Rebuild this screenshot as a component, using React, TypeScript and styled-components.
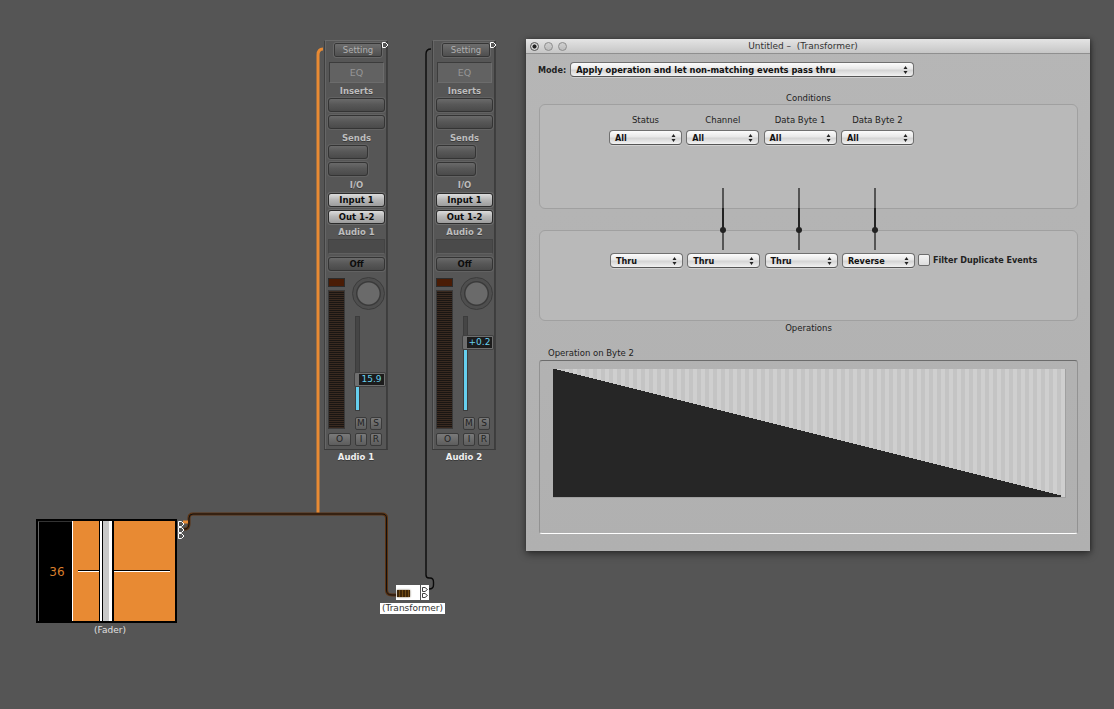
import React from "react";
import styled, { createGlobalStyle } from "styled-components";

const Global = createGlobalStyle`
  html, body { margin: 0; padding: 0; background: #555555; }
  #root { width: 1114px; height: 709px; overflow: hidden; }
  * { box-sizing: border-box; }
`;

const FONT = `"DejaVu Sans", "Liberation Sans", sans-serif`;

const Canvas = styled.div`
  position: relative;
  width: 1114px;
  height: 709px;
  background: #555555;
  font-family: ${FONT};
  overflow: hidden;
`;

const WireLayer = styled.svg`
  position: absolute;
  left: 0;
  top: 0;
`;

/* ---------- channel strip ---------- */
const StripNode = styled.div<{ $x: number }>`
  position: absolute;
  left: ${(p) => p.$x}px;
  top: 40px;
  width: 64px;
`;

const StripBody = styled.div`
  height: 410px;
  border: 1px solid #3f3f3f;
  border-bottom-color: #3a3a3a;
  border-top-color: #6a6a6a;
  background: #565656;
  box-shadow: inset 1px 0 0 #666, inset -1px 0 0 #3d3d3d;
  padding: 2px 2px 0 3px;
  display: flex;
  flex-direction: column;
  align-items: stretch;
`;

const StripLabel = styled.div<{ $h: number; $color?: string; $pt?: number }>`
  height: ${(p) => p.$h}px;
  padding-top: ${(p) => p.$pt ?? 0}px;
  line-height: ${(p) => p.$h - (p.$pt ?? 0)}px;
  font-size: 8.5px;
  font-weight: 700;
  text-align: center;
  color: ${(p) => p.$color ?? "#bdbdbd"};
  text-shadow: 0 1px 0 #3a3a3a;
`;

const SettingBtn = styled.div`
  align-self: center;
  width: 48px;
  height: 14px;
  line-height: 13px;
  margin-left: 3px;
  font-size: 8.5px;
  text-align: center;
  color: #b0b0b0;
  border: 1px solid #363636;
  outline: 1px solid #676767;
  border-radius: 2px;
  background: linear-gradient(#6d6d6d, #4f4f4f);
`;

const EqBox = styled.div`
  width: 55px;
  height: 21px;
  margin: 5px 0 0 1px;
  line-height: 19px;
  font-size: 9.5px;
  text-align: center;
  color: #969696;
  border: 1px solid #3c3c3c;
  border-right-color: #6c6c6c;
  border-bottom-color: #6c6c6c;
  background: #626262;
`;

const Slot = styled.div<{ $w?: number; $mt?: number; $light?: boolean }>`
  width: ${(p) => p.$w ?? 57}px;
  height: 14px;
  margin-top: ${(p) => p.$mt ?? 0}px;
  line-height: 12px;
  font-size: 8.5px;
  font-weight: 700;
  text-align: center;
  color: #0c0c0c;
  border: 1px solid ${(p) => (p.$light ? "#2b2b2b" : "#343434")};
  border-radius: 3px;
  box-shadow: 0 0 0 1px ${(p) => (p.$light ? "#6b6b6b" : "#626262")};
  background: ${(p) =>
    p.$light
      ? "linear-gradient(#dcdcdc, #b8b8b8 45%, #9d9d9d)"
      : "linear-gradient(#6a6a6a, #585858 45%, #4a4a4a)"};
`;

const Display = styled.div`
  width: 57px;
  height: 15px;
  background: #4a4a4a;
  border: 1px solid #434343;
  border-bottom-color: #606060;
`;

const LowerSection = styled.div`
  margin-top: 7px;
  display: grid;
  grid-template-columns: 17px 10px 12px 3px 12px;
  grid-template-rows: 12px 139px;
  position: relative;
`;

const MeterCap = styled.div`
  grid-column: 1;
  grid-row: 1;
  height: 9px;
  background: #4a1c05;
  border: 1px solid #2c2c2c;
`;

const Meter = styled.div`
  grid-column: 1;
  grid-row: 2;
  background: repeating-linear-gradient(#3a2a20 0 1px, #1a1613 1px 2px);
  border: 1px solid #3a3a3a;
`;

const Knob = styled.div`
  position: absolute;
  left: 24px;
  top: -1px;
  width: 33px;
  height: 33px;
  border-radius: 50%;
  border: 1px solid #3b3b3b;
  background: radial-gradient(circle, #6a6a6a 0 10.5px, #3a3a3a 11.5px 12px, #4e4e4e 13px);
`;

const FaderTrack = styled.div`
  position: absolute;
  left: 27px;
  top: 38px;
  width: 5px;
  height: 95px;
  background: #454545;
  border: 1px solid #3c3c3c;
`;

const FaderFill = styled.div`
  position: absolute;
  left: 0;
  right: 0;
  bottom: 0;
  background: #66cfee;
`;

const FaderHandle = styled.div<{ $top: number }>`
  position: absolute;
  left: 27px;
  top: ${(p) => p.$top}px;
  width: 30px;
  height: 13px;
  display: flex;
  padding: 1px 1px 1px 0;
  border-radius: 1px;
  background: #6f6f6f;
  box-shadow: 0 0 0 1px #404040;
`;

const FaderValue = styled.div`
  margin-left: 4px;
  flex: 1;
  background: #1c1c1c;
  color: #66cfee;
  font-size: 9px;
  line-height: 11px;
  text-align: center;
`;

const SmallBtn = styled.div<{ $x: number; $y: number; $w?: number }>`
  position: absolute;
  left: ${(p) => p.$x}px;
  top: ${(p) => p.$y}px;
  width: ${(p) => p.$w ?? 12}px;
  height: 13px;
  line-height: 11px;
  font-size: 9px;
  text-align: center;
  color: #222;
  background: linear-gradient(#7a7a7a, #5d5d5d);
  border: 1px solid #3a3a3a;
  border-radius: 2px;
`;

const Flag = styled.svg<{ $x: number; $y: number }>`
  position: absolute;
  left: ${(p) => p.$x}px;
  top: ${(p) => p.$y}px;
`;

const FlagIcon = ({ x, y }: { x: number; y: number }) => (
  <Flag $x={x} $y={y} width="7" height="6" viewBox="0 0 7 6">
    <path d="M0.5 0.5H3.5L6 3L3.5 5.5H0.5Z" fill="#555" stroke="#fff" strokeWidth="1" />
  </Flag>
);

const DarkFlagIcon = ({ x, y }: { x: number; y: number }) => (
  <Flag $x={x} $y={y} width="6" height="5" viewBox="0 0 6 5">
    <path d="M0.5 0.5H3L5.5 2.5L3 4.5H0.5Z" fill="#fff" stroke="#444" strokeWidth="1" />
  </Flag>
);

const Strip = ({ x, name, value, handleTop, fill }: { x: number; name: string; value: string; handleTop: number; fill: number }) => (
  <StripNode $x={x}>
    <StripBody>
      <SettingBtn>Setting</SettingBtn>
      <EqBox>EQ</EqBox>
      <StripLabel $h={15} $pt={2}>Inserts</StripLabel>
      <Slot />
      <Slot $mt={3} />
      <StripLabel $h={16} $pt={2}>Sends</StripLabel>
      <Slot $w={40} />
      <Slot $w={40} $mt={3} />
      <StripLabel $h={17} $pt={1}>I/O</StripLabel>
      <Slot $light>Input 1</Slot>
      <Slot $light $mt={3}>Out 1-2</Slot>
      <StripLabel $h={15} $pt={2}>{name}</StripLabel>
      <Display />
      <Slot $mt={3}>Off</Slot>
      <LowerSection>
        <MeterCap />
        <Meter />
        <Knob />
        <FaderTrack>
          <FaderFill style={{ height: fill }} />
        </FaderTrack>
        <FaderHandle $top={handleTop}>
          <FaderValue>{value}</FaderValue>
        </FaderHandle>
        <SmallBtn $x={27} $y={139}>M</SmallBtn>
        <SmallBtn $x={42} $y={139}>S</SmallBtn>
        <SmallBtn $x={0} $y={155} $w={23}>O</SmallBtn>
        <SmallBtn $x={27} $y={155}>I</SmallBtn>
        <SmallBtn $x={42} $y={155}>R</SmallBtn>
      </LowerSection>
    </StripBody>
    <StripLabel $h={14} $color="#f0f0f0">{name}</StripLabel>
    <FlagIcon x={58} y={2} />
  </StripNode>
);

/* ---------- fader object ---------- */
const FaderNode = styled.div`
  position: absolute;
  left: 36px;
  top: 519px;
  width: 141px;
  height: 104px;
  border: 2px solid #000;
  display: flex;
  background: #000;
`;

const FaderNumber = styled.div`
  width: 34px;
  padding-left: 3px;
  font-size: 12px;
  color: #d97e2c;
  display: flex;
  align-items: center;
  justify-content: center;
  border-left: 1px solid #666;
  border-top: 1px solid #333;
`;

const FaderField = styled.div`
  flex: 1;
  position: relative;
  background: #e88a33;
  border-left: 1px solid #fff;
`;

const FaderLine = styled.div`
  position: absolute;
  left: 5px;
  right: 5px;
  top: 49px;
  height: 2px;
  background: linear-gradient(#000 50%, #fff 50%);
`;

const FaderCap = styled.div`
  position: absolute;
  left: 26px;
  top: 0;
  bottom: 0;
  width: 15px;
  background: linear-gradient(90deg, #000 0 1px, #fff 1px 3px, #000 3px 4px, #c8c8c8 4px 10px, #fff 10px 13px, #000 13px);
`;

const NodeCaption = styled.div<{ $x: number; $y: number; $w: number; $white?: boolean }>`
  position: absolute;
  left: ${(p) => p.$x}px;
  top: ${(p) => p.$y}px;
  width: ${(p) => p.$w}px;
  height: 11px;
  line-height: 11px;
  text-align: center;
  font-size: 9px;
  color: ${(p) => (p.$white ? "#333" : "#e0e0e0")};
  background: ${(p) => (p.$white ? "#fff" : "transparent")};
`;

const TransformerBox = styled.div`
  position: absolute;
  left: 396px;
  top: 585px;
  width: 24px;
  height: 15px;
  background: #fff;
  display: flex;
  align-items: center;
  padding: 0 1px;
`;

const TransformerIcon = styled.div`
  width: 13px;
  height: 7px;
  margin-top: 1px;
  background: repeating-linear-gradient(90deg, #3d2508 0 2px, #6e4a14 2px 3px);
  box-shadow: 0 0 2px #5a4a30;
`;

const TransformerOut = styled.div`
  position: absolute;
  left: 421px;
  top: 585px;
  width: 8px;
  height: 15px;
  background: #fff;
`;

/* ---------- transformer window ---------- */
const Win = styled.div`
  position: absolute;
  left: 526px;
  top: 39px;
  width: 564px;
  height: 512px;
  background: linear-gradient(#b6b6b6, #b0b0b0);
  box-shadow: 0 3px 8px rgba(0, 0, 0, 0.45), 1px 0 4px rgba(0, 0, 0, 0.3);
  display: flex;
  flex-direction: column;
  color: #222;
`;

const TitleBar = styled.div`
  height: 15px;
  position: relative;
  background: linear-gradient(#e4e4e4, #c6c6c6);
  border-bottom: 1px solid #8f8f8f;
  display: flex;
  align-items: center;
  justify-content: center;
  font-size: 9px;
  color: #333;
  padding-right: 10px;
  white-space: pre;
`;

const Lights = styled.div`
  position: absolute;
  left: 4px;
  top: 3px;
  display: flex;
  gap: 5px;
`;

const Light = styled.div<{ $on?: boolean }>`
  width: 9px;
  height: 9px;
  border-radius: 50%;
  border: 1px solid #8c8c8c;
  background: ${(p) => (p.$on ? "radial-gradient(circle, #222 0 1.7px, #d8d8d8 2.4px)" : "linear-gradient(#d0d0d0, #bcbcbc)")};
  ${(p) => (p.$on ? "border-color: #555;" : "")}
`;

const WinBody = styled.div`
  flex: 1;
  position: relative;
  padding: 8px 12px 0 13px;
  display: flex;
  flex-direction: column;
`;

const ModeRow = styled.div`
  display: flex;
  align-items: center;
  height: 15px;
  font-size: 8.1px;
  font-weight: 700;
  gap: 4px;
  margin-left: -1px;
`;

const Select = styled.div<{ $w?: number }>`
  width: ${(p) => (p.$w ? `${p.$w}px` : "auto")};
  height: 15px;
  display: flex;
  align-items: center;
  justify-content: space-between;
  padding: 0 5px 0 5px;
  font-size: 8.1px;
  font-weight: 700;
  color: #111;
  border: 1px solid #707070;
  border-bottom-color: #555;
  border-radius: 4px;
  background: linear-gradient(#fcfcfc, #e8e8e8 45%, #d4d4d4 55%, #f2f2f2);
  box-shadow: 0 1px 0 rgba(255, 255, 255, 0.35);
`;

const ModeSelect = styled(Select)`
  flex: none;
  font-size: 8.3px;
`;

const Arrows = () => (
  <svg width="5" height="8" viewBox="0 0 5 8">
    <path d="M2.5 0L4.5 3H0.5Z M2.5 8L0.5 5H4.5Z" fill="#222" />
  </svg>
);

const SectionTitle = styled.div<{ $h: number; $pt?: number }>`
  height: ${(p) => p.$h}px;
  padding-top: ${(p) => p.$pt ?? 0}px;
  line-height: ${(p) => p.$h - (p.$pt ?? 0)}px;
  text-align: center;
  font-size: 8.5px;
  color: #222;
`;

const Panel = styled.div<{ $h: number; $pt: number; $pl: number; $mt?: number }>`
  height: ${(p) => p.$h}px;
  margin-top: ${(p) => p.$mt ?? 0}px;
  padding: ${(p) => p.$pt}px 0 0 ${(p) => p.$pl}px;
  border: 1px solid #a0a0a0;
  border-radius: 6px;
  background: #b9b9b9;
`;

const SelectGrid = styled.div`
  display: grid;
  grid-template-columns: repeat(4, 73px);
  column-gap: 4.3px;
  row-gap: 5px;
  align-items: center;
  position: relative;
`;

const ColHead = styled.div`
  text-align: center;
  font-size: 8.5px;
  line-height: 10px;
  color: #222;
`;

const FilterRow = styled.div`
  position: absolute;
  left: 308px;
  top: 1px;
  display: flex;
  align-items: center;
  gap: 3px;
  white-space: nowrap;
  font-size: 8.1px;
  font-weight: 700;
`;

const CheckBox = styled.div`
  width: 12px;
  height: 12px;
  border: 1px solid #6d6d6d;
  border-radius: 2px;
  background: linear-gradient(#f4f4f4, #dedede);
`;

const Connector = styled.div<{ $x: number }>`
  position: absolute;
  left: ${(p) => p.$x}px;
  top: 134px;
  width: 2px;
  height: 62px;
  background: linear-gradient(#555 0 20px, #222 20px 42px, #555 42px);
`;

const ConnectorKnob = styled.div`
  position: absolute;
  left: -2px;
  top: 39px;
  width: 6px;
  height: 6px;
  border-radius: 50%;
  background: #222;
`;

const GroupLabel = styled.div`
  margin-top: 13px;
  margin-left: 9px;
  height: 11px;
  line-height: 11px;
  font-size: 8.5px;
  color: #222;
`;

const GroupBox = styled.div`
  height: 174px;
  margin-top: 1px;
  padding: 8px 11px 0 13px;
  border: 1px solid #929292;
  border-top: 1px solid #6c6c6c;
  border-bottom: 1px solid #fff;
  border-radius: 3px;
`;

const Graph = styled.div`
  position: relative;
  width: 513px;
  height: 129px;
  border-right: 1px solid #a0a0a0;
  border-bottom: 1px solid #a0a0a0;
  background: repeating-linear-gradient(90deg, #c4c4c4 0 4px, #cfcfcf 4px 8px);
`;

const GraphCurve = styled.svg`
  position: absolute;
  left: 0;
  top: 0;
`;

const stepped = () => {
  let d = "M0 128V0";
  for (let i = 0; i < 127; i++) {
    d += `H${(i + 1) * 4}V${i + 1}`;
  }
  return d + "V128Z";
};

const conditionLabels = ["Status", "Channel", "Data Byte 1", "Data Byte 2"];
const operations = ["Thru", "Thru", "Thru", "Reverse"];

const PopUp = ({ label }: { label: string }) => (
  <Select>
    <span>{label}</span>
    <Arrows />
  </Select>
);

export default function App() {
  const brown =
    "M184 529H186Q189 528 189 524V518Q189 514 193 514H382Q386.5 514 386.5 518V590Q386.5 595 392 595H397";
  return (
    <Canvas>
      <Global />
      <WireLayer width="1114" height="709" viewBox="0 0 1114 709" fill="none">
        <path d="M318 513V55Q318 49 323 49" stroke="#e88a33" strokeWidth="3" />
        <path d={brown} stroke="#5c3312" strokeWidth="3" />
        <path d={brown} stroke="#111" strokeWidth="1" />
        <path d="M188 522H183" stroke="#e88a33" strokeWidth="3" />
        <path d="M431 49Q426 49 426 54V575Q426 578 429 578H430Q433.5 578 433.5 582V585Q433.5 589 429 589" stroke="#0a0a0a" strokeWidth="1.4" />
      </WireLayer>

      <Strip x={324} name="Audio 1" value="15.9" handleTop={95} fill={24} />
      <Strip x={432} name="Audio 2" value="+0.2" handleTop={58} fill={61} />

      <FaderNode>
        <FaderNumber>36</FaderNumber>
        <FaderField>
          <FaderLine />
          <FaderCap />
        </FaderField>
      </FaderNode>
      <FlagIcon x={178} y={521} />
      <FlagIcon x={178} y={527} />
      <FlagIcon x={178} y={533} />
      <NodeCaption $x={80} $y={625} $w={60}>(Fader)</NodeCaption>

      <TransformerBox>
        <TransformerIcon />
      </TransformerBox>
      <TransformerOut />
      <DarkFlagIcon x={422} y={587} />
      <DarkFlagIcon x={422} y={593} />
      <NodeCaption $x={380} $y={603} $w={65} $white>(Transformer)</NodeCaption>

      <Win>
        <TitleBar>
          <Lights>
            <Light $on />
            <Light />
            <Light />
          </Lights>
          {"Untitled –  (Transformer)"}
        </TitleBar>
        <WinBody>
          <ModeRow>
            Mode:
            <ModeSelect $w={344}>
              <span>Apply operation and let non-matching events pass thru</span>
              <Arrows />
            </ModeSelect>
          </ModeRow>
          <SectionTitle $h={27} $pt={16}>Conditions</SectionTitle>
          <Panel $h={105} $pt={10} $pl={69}>
            <SelectGrid>
              {conditionLabels.map((l) => (
                <ColHead key={l}>{l}</ColHead>
              ))}
              {conditionLabels.map((l) => (
                <PopUp key={l} label="All" />
              ))}
            </SelectGrid>
          </Panel>
          <Panel $h={91} $pt={22} $pl={70} $mt={21}>
            <SelectGrid>
              {operations.map((l, i) => (
                <PopUp key={i} label={l} />
              ))}
              <FilterRow>
                <CheckBox />
                Filter Duplicate Events
              </FilterRow>
            </SelectGrid>
          </Panel>
          <SectionTitle $h={14}>Operations</SectionTitle>
          <GroupLabel>Operation on Byte 2</GroupLabel>
          <GroupBox>
            <Graph>
              <GraphCurve width="512" height="128" viewBox="0 0 512 128">
                <path d={stepped()} fill="#262626" shapeRendering="crispEdges" />
              </GraphCurve>
            </Graph>
          </GroupBox>
          <Connector $x={196}>
            <ConnectorKnob />
          </Connector>
          <Connector $x={272}>
            <ConnectorKnob />
          </Connector>
          <Connector $x={348}>
            <ConnectorKnob />
          </Connector>
        </WinBody>
      </Win>
    </Canvas>
  );
}
